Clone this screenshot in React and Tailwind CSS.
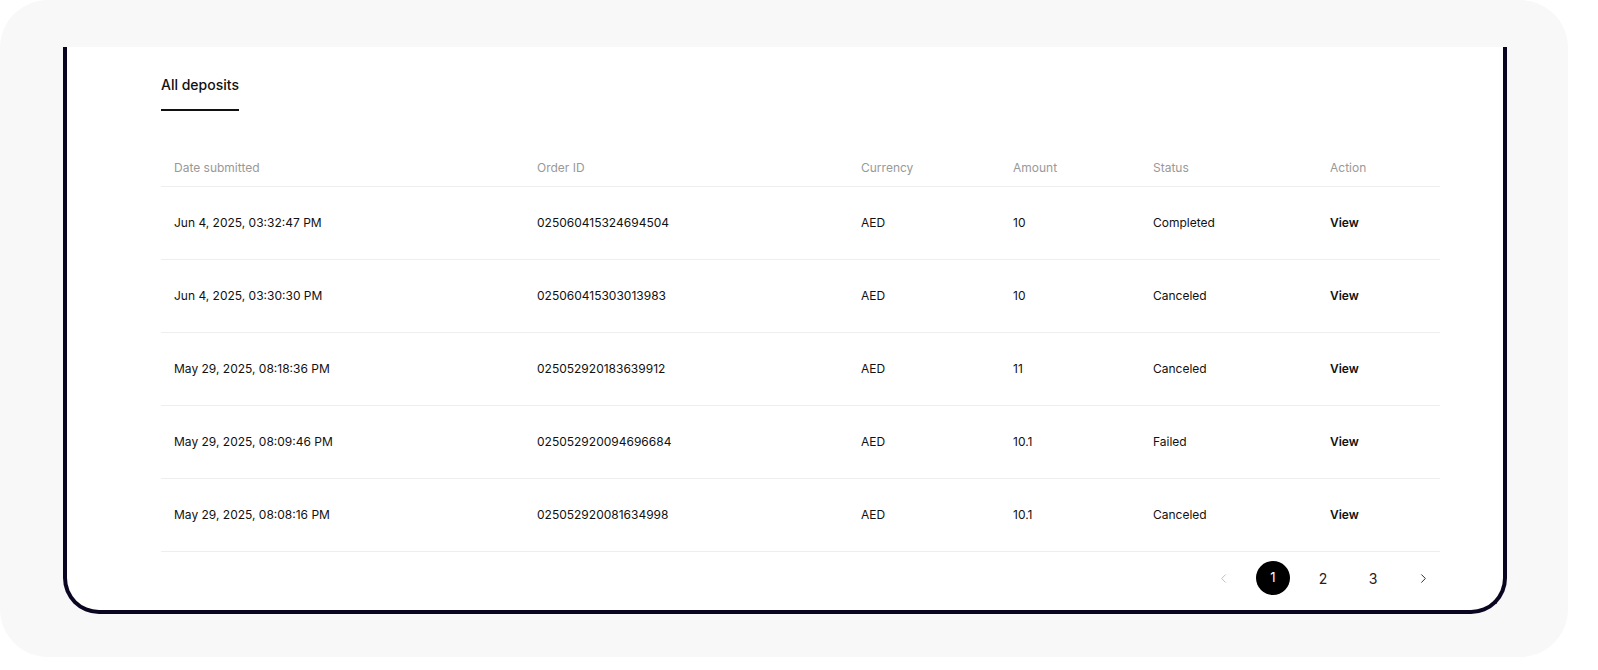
import { ChevronLeft, ChevronRight } from "lucide-react";
export default function App() {
  const rows = [
    ["Jun 4, 2025, 03:32:47 PM", "025060415324694504", "AED", "10", "Completed"],
    ["Jun 4, 2025, 03:30:30 PM", "025060415303013983", "AED", "10", "Canceled"],
    ["May 29, 2025, 08:18:36 PM", "025052920183639912", "AED", "11", "Canceled"],
    ["May 29, 2025, 08:09:46 PM", "025052920094696684", "AED", "10.1", "Failed"],
    ["May 29, 2025, 08:08:16 PM", "025052920081634998", "AED", "10.1", "Canceled"],
  ];
  const cols = "grid grid-cols-[363px_324px_152px_140px_177px_1fr]";
  return (
    <div className="w-[1598px] h-[670px] bg-white" style={{ fontFamily: "Inter, 'Liberation Sans', sans-serif" }}>
      <div className="w-[1568px] h-[657px] bg-[#f8f8f9] rounded-[48px] pt-[47px] pl-[63px]">
        <div className="w-[1444px] h-[567px] bg-white border-x-4 border-b-4 border-[#0a0520] rounded-b-[36px] pl-[94px] pr-[63px] pt-[24px]">
          <div className="inline-block text-[14px] text-[#111] pb-[11px] border-b-2 border-[#111] leading-[27px] font-medium">All deposits</div>
          <div className="mt-[32px] text-[12px] text-[#999] h-[44px] border-b border-[#eee] items-center pl-[13px] pt-[6px] grid grid-cols-[363px_324px_152px_140px_177px_1fr]">
            <div>Date submitted</div><div>Order ID</div><div>Currency</div><div>Amount</div><div>Status</div><div>Action</div>
          </div>
          {rows.map((r, i) => (
            <div key={i} className={cols + " h-[73px] items-center border-b border-[#eee] pl-[13px] text-[12px] text-[#111]"}>
              {r.map((c, j) => <div key={j}>{c}</div>)}
              <div className="font-semibold">View</div>
            </div>
          ))}
          <div className="flex justify-end items-center h-[52px] text-[14px] text-[#222]">
            <span className="w-[34px] flex justify-center text-[#bbb]"><ChevronLeft size={15} strokeWidth={1.5} /></span>
            <span className="w-[34px] h-[34px] ml-[16px] rounded-full bg-black text-white flex items-center justify-center text-[13px]">1</span>
            <span className="w-[34px] ml-[16px] text-center">2</span>
            <span className="w-[34px] ml-[16px] text-center">3</span>
            <span className="w-[34px] ml-[16px] flex justify-center"><ChevronRight size={15} strokeWidth={1.5} /></span>
          </div>
        </div>
      </div>
    </div>
  );
}
